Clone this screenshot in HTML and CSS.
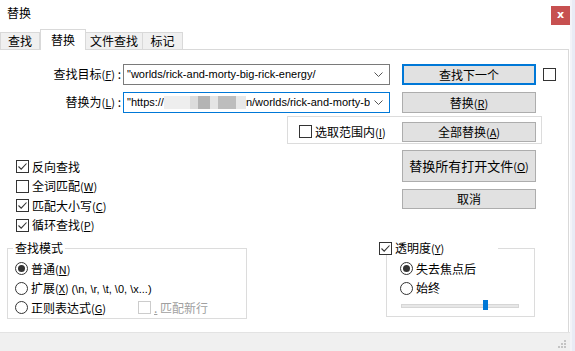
FILE: index.html
```html
<!DOCTYPE html>
<html lang="zh">
<head>
    <meta charset="UTF-8">
    <title>替换</title>
    <link rel="stylesheet" href="styles.css">
</head>
<body>
<div class="screen">
    <div class="dialog">
        <div class="titlebar">
            <span class="title">替换</span>
            <span class="close">x</span>
        </div>

        <div class="tabs">
            <span class="tab t1">查找</span>
            <span class="tab t2 on">替换</span>
            <span class="tab t3">文件查找</span>
            <span class="tab t4">标记</span>
        </div>

        <div class="panel">
            <div class="row row1">
                <span class="lbl">查找目标<span class="acc">(<u>F</u>)</span> :</span>
                <div class="combo">
                    <span class="val">"worlds/rick-and-morty-big-rick-energy/</span>
                    <svg class="chev" width="9" height="5" viewBox="0 0 9 5"><polyline points="0.5,0.5 4.5,4.5 8.5,0.5" fill="none" stroke="#555" stroke-width="1"/></svg>
                </div>
                <span class="btn default">查找下一个</span>
                <span class="box side"></span>
            </div>

            <div class="row row2">
                <span class="lbl">替换为<span class="acc">(<u>L</u>)</span> :</span>
                <div class="combo focus">
                    <span class="val">"https://<span class="blur"><i class="b1"></i><i class="b2"></i><i class="b3"></i><i class="b4"></i><i class="b5"></i><i class="b6"></i></span>n/worlds/rick-and-morty-b</span>
                    <svg class="chev" width="9" height="5" viewBox="0 0 9 5"><polyline points="0.5,0.5 4.5,4.5 8.5,0.5" fill="none" stroke="#555" stroke-width="1"/></svg>
                </div>
                <span class="btn">替换<span class="acc">(<u>R</u>)</span></span>
            </div>

            <div class="range">
                <span class="box"></span>
                <span class="cap">选取范围内<span class="acc">(<u>I</u>)</span></span>
                <span class="btn">全部替换<span class="acc">(<u>A</u>)</span></span>
            </div>

            <div class="middle">
                <div class="opts">
                    <div class="opt"><span class="box checked"><svg width="11" height="11" viewBox="0 0 11 11"><polyline points="1.5,5.5 4.2,8.2 9.5,2.5" fill="none" stroke="#333" stroke-width="1.1"/></svg></span><span class="cap">反向查找</span></div>
                    <div class="opt"><span class="box"></span><span class="cap">全词匹配<span class="acc">(<u>W</u>)</span></span></div>
                    <div class="opt"><span class="box checked"><svg width="11" height="11" viewBox="0 0 11 11"><polyline points="1.5,5.5 4.2,8.2 9.5,2.5" fill="none" stroke="#333" stroke-width="1.1"/></svg></span><span class="cap">匹配大小写<span class="acc">(<u>C</u>)</span></span></div>
                    <div class="opt"><span class="box checked"><svg width="11" height="11" viewBox="0 0 11 11"><polyline points="1.5,5.5 4.2,8.2 9.5,2.5" fill="none" stroke="#333" stroke-width="1.1"/></svg></span><span class="cap">循环查找<span class="acc">(<u>P</u>)</span></span></div>
                </div>
                <div class="actions">
                    <span class="btn tall">替换所有打开文件<span class="acc">(<u>O</u>)</span></span>
                    <span class="btn">取消</span>
                </div>
            </div>

            <div class="bottom">
                <fieldset class="mode">
                    <legend>查找模式</legend>
                    <div class="opt"><span class="radio on"></span><span class="cap">普通<span class="acc">(<u>N</u>)</span></span></div>
                    <div class="opt"><span class="radio"></span><span class="cap">扩展<span class="acc">(<u>X</u>)</span> <span class="latin">(\n, \r, \t, \0, \x...)</span></span></div>
                    <div class="opt"><span class="radio"></span><span class="cap">正则表达式<span class="acc">(<u>G</u>)</span></span>
                        <span class="newline"><span class="box off"></span><span class="cap dim"><u>.</u> 匹配新行</span></span>
                    </div>
                </fieldset>

                <fieldset class="alpha">
                    <legend><span class="box checked"><svg width="11" height="11" viewBox="0 0 11 11"><polyline points="1.5,5.5 4.2,8.2 9.5,2.5" fill="none" stroke="#333" stroke-width="1.1"/></svg></span><span class="cap">透明度<span class="acc">(<u>Y</u>)</span></span></legend>
                    <div class="opt"><span class="radio on"></span><span class="cap">失去焦点后</span></div>
                    <div class="opt"><span class="radio"></span><span class="cap">始终</span></div>
                    <div class="slider"><span class="thumb"></span></div>
                </fieldset>
            </div>
        </div>

        <div class="status">
            <svg class="grip" width="10" height="10" viewBox="0 0 10 10">
                <rect x="8" y="2" width="2" height="2" fill="#c4c4c4"/>
                <rect x="5" y="5" width="2" height="2" fill="#c4c4c4"/>
                <rect x="8" y="5" width="2" height="2" fill="#c4c4c4"/>
                <rect x="2" y="8" width="2" height="2" fill="#c4c4c4"/>
                <rect x="5" y="8" width="2" height="2" fill="#c4c4c4"/>
                <rect x="8" y="8" width="2" height="2" fill="#c4c4c4"/>
            </svg>
        </div>
    </div>
    <div class="edge"></div>
</div>
</body>
</html>
```

FILE: styles.css
```css
* {
    box-sizing: border-box;
}

body {
    margin: 0;
    font: 12px/16px "Noto Sans CJK SC", sans-serif;
    color: #000;
    background: #fff;
}

.screen {
    display: flex;
    width: 575px;
    height: 351px;
    overflow: hidden;
}

.dialog {
    width: 570px;
    display: flex;
    flex-direction: column;
    background: #fff;
}

/* editor behind the dialog */
.edge {
    width: 5px;
    background:
        linear-gradient(#e9ebf5, #e9ebf5) 0 0 / 5px 351px no-repeat;
    background-color: #e9ebf5;
    box-shadow: inset 2px 0 0 #f3f3f8;
}

.titlebar {
    height: 29px;
    display: flex;
    align-items: flex-start;
}

.title {
    padding-left: 7px;
    line-height: 26px;
}

.close {
    margin-left: auto;
    margin-top: 6px;
    width: 19px;
    height: 19px;
    background: #c75050;
    color: #fff;
    font: bold 11px/18px "DejaVu Sans", sans-serif;
    text-align: center;
}

/* tabs */
.tabs {
    height: 21px;
    display: flex;
    align-items: flex-end;
    margin-bottom: -1px;
    position: relative;
    z-index: 1;
}

.tab {
    height: 17px;
    margin-bottom: 1px;
    background: #f0f0f0;
    border: 1px solid #d9d9d9;
    border-bottom: none;
    text-align: center;
    line-height: 16px;
}

.tab + .tab {
    border-left: none;
}

.t1 { width: 40px; }
.t2 { width: 46px; }
.t3 { width: 57px; }
.t4 { width: 40px; }

.tab.on {
    height: 21px;
    margin-bottom: 0;
    background: #fff;
    line-height: 19px;
    border-left: 1px solid #d9d9d9;
}

.tab.on + .tab {
    border-left: none;
}

.panel {
    flex: 1;
    margin-right: 1px;
    border-top: 1px solid #d9d9d9;
    border-right: 1px solid #d9d9d9;
    display: flex;
    flex-direction: column;
}

.acc {
    font-size: 11px;
}

.latin {
    font: 11px/16px "Liberation Sans", sans-serif;
}

/* find / replace rows */
.row {
    display: flex;
    align-items: center;
    height: 22px;
}

.row1 {
    margin-top: 13px;
}

.row2 {
    margin-top: 6px;
}

.lbl {
    width: 123px;
    padding-right: 2px;
    text-align: right;
}

.combo {
    width: 267px;
    height: 21px;
    border: 1px solid #7a7a7a;
    display: flex;
    align-items: center;
    padding-left: 3px;
}

.combo.focus {
    border-color: #0078d7;
}

.val {
    flex: 1;
    overflow: hidden;
    white-space: nowrap;
    font: 11px/16px "Liberation Sans", sans-serif;
}

.chev {
    margin: 0 6px 0 4px;
}

.blur {
    display: inline-flex;
    vertical-align: middle;
    height: 13px;
    margin-top: -2px;
}

.blur i {
    display: block;
    height: 13px;
}

.b1 { width: 26px; background: #eeeeee; }
.b2 { width: 8px; background: #dcdcdc; }
.b3 { width: 12px; background: #b4b4b4; }
.b4 { width: 8px; background: #e4e4e4; }
.b5 { width: 18px; background: #bdbdbd; }
.b6 { width: 10px; background: #e8e8e8; }

.btn {
    width: 134px;
    height: 21px;
    margin-left: 12px;
    background: #e1e1e1;
    border: 1px solid #adadad;
    text-align: center;
    line-height: 19px;
}

.btn.default {
    border: 2px solid #0078d7;
    line-height: 17px;
}

.box {
    width: 13px;
    height: 13px;
    border: 1px solid #333;
    background: #fff;
    flex-shrink: 0;
    display: inline-block;
}

.box svg {
    display: block;
}

.box.side {
    margin-left: 7px;
}

.box.off {
    border-color: #cccccc;
}

.cap {
    margin-left: 3px;
    white-space: nowrap;
}

.dim {
    color: #a0a0a0;
}

.range {
    margin: 3px 0 0 287px;
    width: 255px;
    height: 28px;
    border: 1px solid #dcdcdc;
    display: flex;
    align-items: center;
    padding: 3px 5px 0 11px;
}

.range .btn {
    margin-left: auto;
    height: 20px;
    line-height: 18px;
}

/* options and action buttons */
.middle {
    display: flex;
    margin-top: 6px;
    height: 84px;
}

.opts {
    margin-left: 16px;
    padding-top: 7px;
}

.opt {
    height: 19.5px;
    display: flex;
    align-items: center;
}

.actions {
    margin-left: auto;
    margin-right: 32px;
    display: flex;
    flex-direction: column;
    gap: 7px;
}

.actions .btn {
    margin-left: 0;
    height: 20px;
    line-height: 18px;
}

.actions .btn.tall {
    height: 32px;
    line-height: 30px;
    font-size: 13px;
}

/* group boxes */
.bottom {
    display: flex;
    align-items: flex-start;
    margin-top: 7px;
}

fieldset {
    margin: 0;
    padding: 4px 0 0 0;
    border: 1px solid #dcdcdc;
}

legend {
    line-height: 14px;
    padding: 0 2px;
}

.mode {
    margin-left: 7px;
    width: 240px;
    padding-left: 7px;
}

.mode legend {
    margin-left: -2px;
}

.radio {
    width: 13px;
    height: 13px;
    border: 1px solid #333;
    border-radius: 50%;
    background: #fff;
    flex-shrink: 0;
    display: flex;
    align-items: center;
    justify-content: center;
}

.radio.on::after {
    content: "";
    width: 7px;
    height: 7px;
    border-radius: 50%;
    background: #333;
}

.newline {
    display: flex;
    align-items: center;
    margin-left: 32px;
}

.alpha {
    margin-left: 139px;
    width: 149px;
    padding-left: 13px;
    padding-bottom: 8px;
}

.alpha legend {
    display: flex;
    align-items: center;
    width: 119px;
    margin-left: -21px;
    padding: 0;
}

.slider {
    position: relative;
    width: 118px;
    height: 4px;
    margin: 6px 0 0 1px;
    background: #e7e7e7;
    border: 1px solid #d6d6d6;
}

.thumb {
    position: absolute;
    left: 81px;
    top: -5px;
    width: 5px;
    height: 10px;
    background: #0078d7;
}

.status {
    height: 19px;
    background: #f0f0f0;
    border-top: 1px solid #e3e3e3;
    display: flex;
    justify-content: flex-end;
    align-items: flex-end;
}

.grip {
    margin: 0 4px 3px 0;
}
```
